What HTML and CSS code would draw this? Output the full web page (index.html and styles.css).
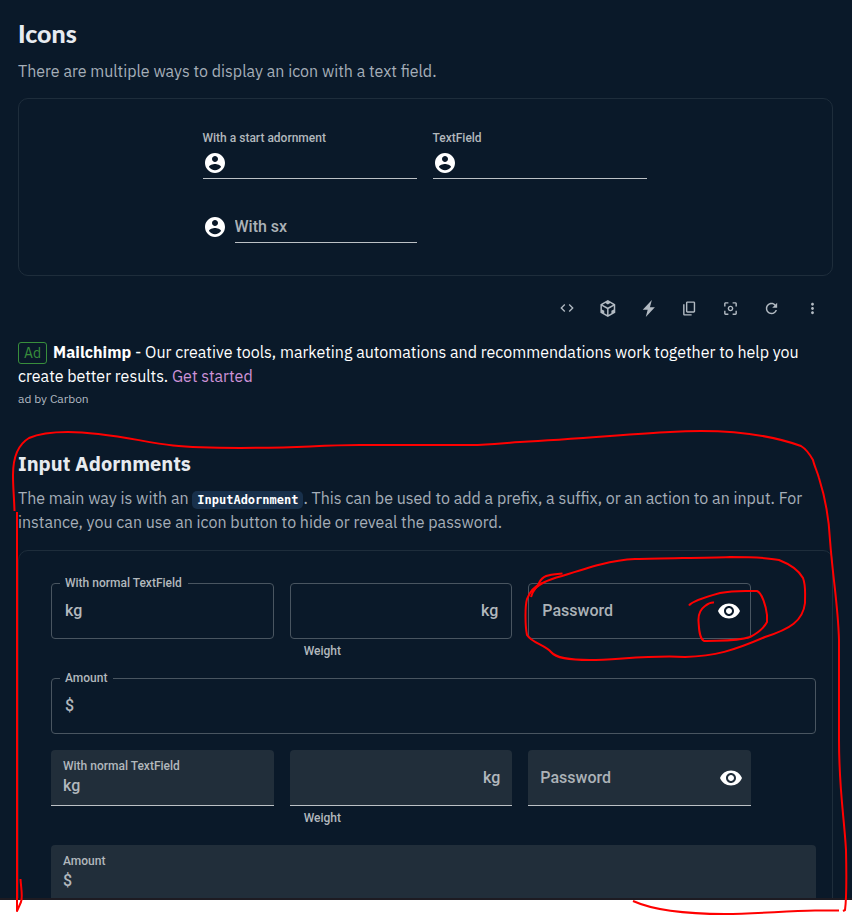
FILE: index.html
```html
<!DOCTYPE html>
<html lang="en">
<head>
<meta charset="utf-8">
<meta name="viewport" content="width=device-width, initial-scale=1">
<title>Text Field - Icons</title>
<link rel="stylesheet" href="styles.css">
</head>
<body>
<svg class="sprite" aria-hidden="true">
  <symbol id="account" viewBox="0 0 24 24"><path d="M12 2C6.48 2 2 6.48 2 12s4.48 10 10 10 10-4.48 10-10S17.52 2 12 2zm0 3c1.66 0 3 1.34 3 3s-1.34 3-3 3-3-1.34-3-3 1.34-3 3-3zm0 14.2c-2.5 0-4.71-1.28-6-3.22.03-1.99 4-3.08 6-3.08 1.99 0 5.97 1.09 6 3.08-1.29 1.94-3.5 3.22-6 3.22z"/></symbol>
  <symbol id="eye" viewBox="0 0 24 24"><path d="M12 4.500C7 4.500 2.730 7.610 1 12c1.730 4.390 6 7.500 11 7.500s9.270-3.110 11-7.500c-1.730-4.390-6-7.500-11-7.500zM12 17c-2.760 0-5-2.240-5-5s2.240-5 5-5 5 2.240 5 5-2.240 5-5 5zm0-8c-1.660 0-3 1.340-3 3s1.340 3 3 3 3-1.340 3-3-1.340-3-3-3z"/></symbol>
</svg>
<main class="page">
  <section>
    <h2 class="title">Icons</h2>
    <p class="text">There are multiple ways to display an icon with a text field.</p>
    <div class="demo demo-icons">
      <div class="standard">
        <label for="start">With a start adornment</label>
        <div class="line"><svg class="icon"><use href="#account"/></svg><input id="start" type="text"></div>
      </div>
      <div class="standard">
        <label for="textfield">TextField</label>
        <div class="line"><svg class="icon"><use href="#account"/></svg><input id="textfield" type="text"></div>
      </div>
      <div class="with-sx">
        <svg class="icon"><use href="#account"/></svg>
        <div class="line"><input type="text" placeholder="With sx" aria-label="With sx"></div>
      </div>
    </div>
    <div class="toolbar">
      <button type="button" aria-label="Show the source"><svg viewBox="0 0 24 24"><path d="M9.400 16.600 4.800 12l4.600-4.600L8 6l-6 6 6 6 1.400-1.400zm5.200 0 4.600-4.600-4.600-4.600L16 6l6 6-6 6-1.400-1.400z"/></svg></button>
      <button type="button" class="large" aria-label="Edit in CodeSandbox"><svg viewBox="0 0 24 24"><path d="M2 6l10.455-6L22.910 6 23 17.950 12.455 24 2 18V6zm2.088 2.481v4.757l3.345 1.860v3.516l3.972 2.296v-8.272L4.088 8.481zm16.739 0-7.317 4.157v8.272l3.972-2.296V15.100l3.345-1.861V8.480zM5.134 6.601l7.303 4.144 7.320-4.180-3.871-2.197-3.410 1.945-3.430-1.968L5.133 6.600z"/></svg></button>
      <button type="button" class="large" aria-label="Edit in StackBlitz"><svg viewBox="0 0 19 28"><path d="M8.133 16.120H0L14.997 0l-3.131 11.873H20L5.003 28l3.130-11.880z"/></svg></button>
      <button type="button" class="large" aria-label="Copy the source"><svg viewBox="0 0 24 24"><path d="M18 2H9c-1.100 0-2 .9-2 2v12c0 1.100.9 2 2 2h9c1.100 0 2-.9 2-2V4c0-1.100-.9-2-2-2zm0 14H9V4h9v12zM3 6h2v14h10v2H5c-1.100 0-2-.9-2-2V6z"/></svg></button>
      <button type="button" class="large" aria-label="Reset focus"><svg viewBox="0 0 24 24"><path d="M5 15H3v4c0 1.100.9 2 2 2h4v-2H5v-4zM5 5h4V3H5c-1.100 0-2 .9-2 2v4h2V5zm14-2h-4v2h4v4h2V5c0-1.100-.9-2-2-2zm0 16h-4v2h4c1.100 0 2-.9 2-2v-4h-2v4zM12 8c-2.210 0-4 1.790-4 4s1.790 4 4 4 4-1.790 4-4-1.790-4-4-4zm0 6c-1.100 0-2-.9-2-2s.9-2 2-2 2 .9 2 2-.9 2-2 2z"/></svg></button>
      <button type="button" class="large" aria-label="Reset demo"><svg viewBox="0 0 24 24"><path d="M17.650 6.350C16.200 4.900 14.210 4 12 4c-4.420 0-7.990 3.580-7.990 8s3.570 8 7.990 8c3.730 0 6.840-2.550 7.730-6h-2.080c-.82 2.330-3.040 4-5.650 4-3.310 0-6-2.690-6-6s2.690-6 6-6c1.660 0 3.140.69 4.220 1.780L13 11h7V4l-2.350 2.350z"/></svg></button>
      <button type="button" class="large" aria-label="See more"><svg viewBox="0 0 24 24"><path d="M12 8c1.100 0 2-.9 2-2s-.9-2-2-2-2 .9-2 2 .9 2 2 2zm0 2c-1.100 0-2 .9-2 2s.9 2 2 2 2-.9 2-2-.9-2-2-2zm0 6c-1.100 0-2 .9-2 2s.9 2 2 2 2-.9 2-2-.9-2-2-2z"/></svg></button>
    </div>
  </section>

  <aside class="ad">
    <p class="ad-text"><span class="badge">Ad</span><strong>Mailchimp</strong> - Our creative tools, marketing automations and recommendations work together to help you create better results. <a href="#">Get started</a></p>
    <p class="ad-by">ad by Carbon</p>
  </aside>

  <section>
    <h3 class="subtitle">Input Adornments</h3>
    <p class="text">The main way is with an <code>InputAdornment</code>. This can be used to add a prefix, a suffix, or an action to an input. For instance, you can use an icon button to hide or reveal the password.</p>
    <div class="demo demo-adornments">
      <div class="row">
        <div class="box outlined">
          <label for="o-normal">With normal TextField</label>
          <span>kg</span><input id="o-normal" type="text">
        </div>
        <div>
          <div class="box outlined"><input type="text" aria-label="weight" aria-describedby="o-help"><span>kg</span></div>
          <p class="helper" id="o-help">Weight</p>
        </div>
        <div class="box outlined">
          <input type="password" placeholder="Password" aria-label="Password">
          <button type="button" class="toggle" aria-label="toggle password visibility"><svg class="icon"><use href="#eye"/></svg></button>
        </div>
      </div>
      <div class="box outlined">
        <label for="o-amount">Amount</label>
        <span>$</span><input id="o-amount" type="text">
      </div>
      <div class="row">
        <div class="box filled labelled">
          <label for="f-normal">With normal TextField</label>
          <span>kg</span><input id="f-normal" type="text">
        </div>
        <div>
          <div class="box filled"><input type="text" aria-label="weight" aria-describedby="f-help"><span>kg</span></div>
          <p class="helper" id="f-help">Weight</p>
        </div>
        <div class="box filled">
          <input type="password" placeholder="Password" aria-label="Password">
          <button type="button" class="toggle" aria-label="toggle password visibility"><svg class="icon"><use href="#eye"/></svg></button>
        </div>
      </div>
      <div class="box filled labelled">
        <label for="f-amount">Amount</label>
        <span>$</span><input id="f-amount" type="text">
      </div>
    </div>
  </section>
</main>
<svg class="markup" viewBox="0 0 852 915" aria-hidden="true">
  <path d="M14.500 511C14 495 13 488 13 475C13 455 19 444 29 438C38 434 53 432 68 432C107 432 142 442 173 445.500C205 449 275 448 310 446.500Q340 445 360 445H470C492 445 503 443 520 442C580 439 630 434 670 432C720 429 765 433 801 446C806 449 809 453 813 460C814 465 817 471 819 478C825 497 829 520 830 540C833 580 838 605 839 640V740C839 790 844 815 846 850Q847 895 845 910L843 911"/>
  <path d="M839 910.500H815C785 911 755 914 725 914C685 914 653 910 633 901"/>
  <path d="M17 512V911L21 902C23 897 21 888 20.500 879"/>
  <path d="M562.500 573.500C548 575 543 575 539 583C537 588 533 589 531 597"/>
  <path d="M532 592C538 584 547 580 562 576C590 567 612 560 635 559C665 558 700 558 730 557Q765 557 779 560Q797 567 803 578C806 586 805 592 805 603C803 621 790 629 765 637C733 651 715 656 685 657C650 655 615 660 590 660C568 660 556 658 551 652C545 645 532 643 527 635C525 625 525 606 527 599Q531 588 542 583"/>
  <path d="M689 605.500C692 601 709 596 720 593C735 590 745 591 757 591C762 593 766 606 767 615V622C764 628 756 634 750 637C735 642 717 640 704 641C699 638 699 628 698.500 621Q698 611 705 606Q710 602 714 602.500"/>
</svg>
</body>
</html>
```

FILE: styles.css
```css
* { box-sizing: border-box; }

body {
  margin: 0;
  position: relative;
  min-height: 100vh;
  background: #fff;
  font-family: "IBM Plex Sans", "Noto Sans", sans-serif;
  font-size: 16px;
  line-height: 24px;
}

h2, h3, p { margin: 0; }

.page {
  height: calc(100vh - 15px);
  overflow: hidden;
  padding: 17px 19px 0 18px;
  background: #0a1929;
  border-bottom: 2px solid #1d1b22;
  color: #fff;
}

.sprite { display: none; }
.icon { flex: none; width: 24px; height: 24px; fill: #fff; }

.title, .subtitle { color: #e7ebf0; }
.title { font: 900 25px/32px Lato, sans-serif; }
.subtitle { font-size: 20px; line-height: 28px; }
.text { margin-top: 10px; color: #a5aeb8; }
.subtitle + .text { margin-top: 8px; }

code {
  padding: 2px 5px;
  border-radius: 5px;
  background: #18304b;
  color: #fff;
  font: bold 12px/16px "DejaVu Sans Mono", monospace;
}

.demo {
  margin-top: 15px;
  border: 1px solid #1e2d3b;
  border-radius: 10px;
  font-family: Roboto, sans-serif;
  font-weight: 500;
  color: #b2b8bd;
}

.demo-icons {
  display: grid;
  grid-template-columns: repeat(2, 214px);
  justify-content: center;
  gap: 16px;
  padding: 32px 34px 32px 32px;
}

.demo input {
  flex: 1;
  min-width: 0;
  width: 100%;
  height: 24px;
  padding: 0;
  border: 0;
  outline: 0;
  background: none;
  color: #fff;
  font: inherit;
}
.demo input::placeholder { color: #acb2b7; opacity: 1; }

.standard label { display: block; margin-bottom: 2px; font-size: 12px; line-height: 14px; }
.line {
  display: flex;
  flex: 1;
  height: 32px;
  padding-top: 4px;
  border-bottom: 1px solid #bcc1c5;
}
.with-sx { display: flex; align-items: flex-end; gap: 8px; height: 48px; }
.with-sx .icon { margin-bottom: 4px; }

.toolbar { display: flex; justify-content: flex-end; margin: 16px 0; }
.toolbar button {
  display: flex;
  align-items: center;
  justify-content: center;
  width: 41px;
  height: 32px;
  padding: 0;
  border: 0;
  background: none;
}
.toolbar svg { width: 16px; height: 16px; fill: #b2bac2; }
.toolbar .large svg { width: 17px; height: 17px; }

.badge {
  display: inline-block;
  margin-right: 6px;
  padding: 0 5px;
  border: 1px solid #388e3c;
  border-radius: 3px;
  color: #388e3c;
  font-size: 14px;
  line-height: 20px;
}
.ad a { color: #ce93d8; text-decoration: none; }
.ad-by { margin: 3px 0 43px; color: #b2bac2; font-size: 12px; line-height: 16px; }

.demo-adornments {
  display: flex;
  flex-direction: column;
  gap: 16px;
  padding: 32px 16px 32px 32px;
}
.subtitle ~ .demo { margin-top: 16px; }
.row {
  display: grid;
  grid-template-columns: repeat(3, 1fr);
  gap: 16px;
  max-width: 700px;
}

.box {
  position: relative;
  display: flex;
  align-items: center;
  gap: 8px;
  height: 56px;
  border-radius: 4px;
}
.box label { position: absolute; font-size: 12px; line-height: 16px; }
.toggle { display: flex; margin-right: -4px; padding: 0; border: 0; background: none; }

.outlined { padding: 0 13px; border: 1px solid #495560; }
.outlined label { top: -9px; left: 8px; padding: 0 6px 0 5px; background: #0a1929; }

.filled {
  padding: 0 12px;
  border-bottom: 1px solid #bcc1c5;
  border-radius: 4px 4px 0 0;
  background: #212e3a;
}
.filled label { top: 8px; left: 12px; }
.labelled { padding-top: 16px; }

.helper { margin: 3px 14px 2px; font-size: 12px; line-height: 18px; }

.markup {
  position: absolute;
  top: 0;
  left: 0;
  width: 852px;
  height: 915px;
  pointer-events: none;
  fill: none;
  stroke: #f00;
  stroke-width: 2;
  stroke-linejoin: round;
}
```
